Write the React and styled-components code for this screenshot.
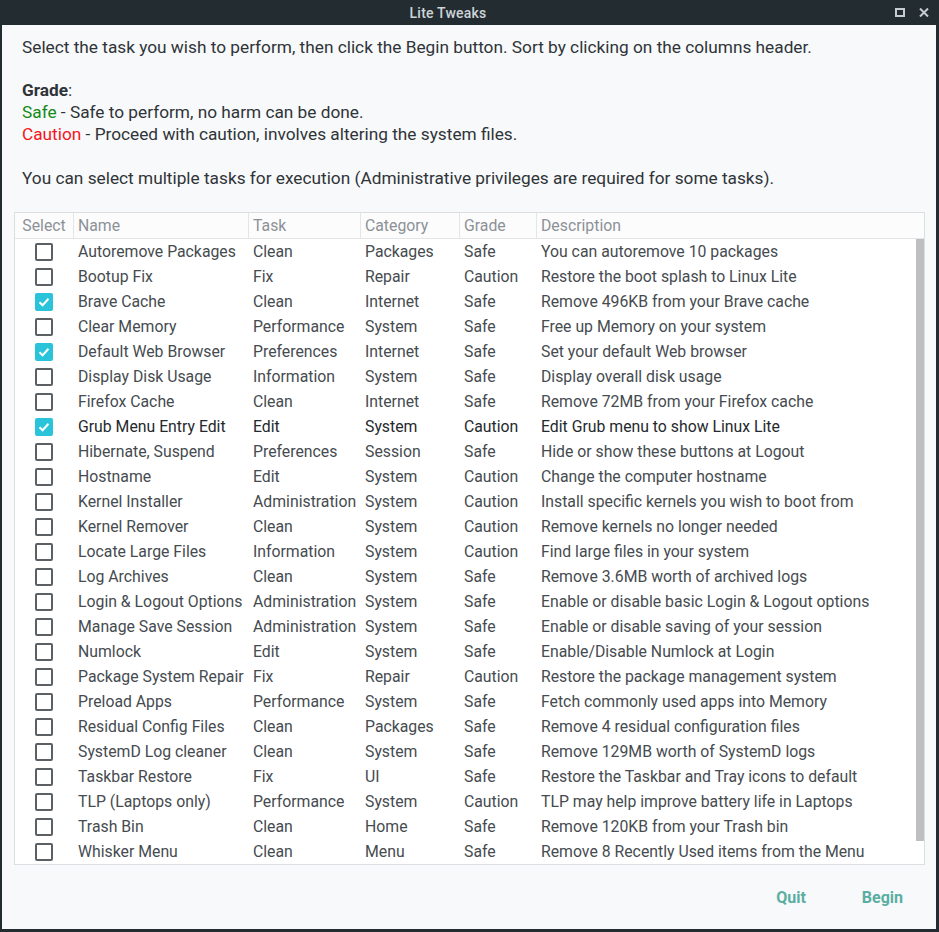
import React from "react";
import styled, { createGlobalStyle } from "styled-components";

const Global = createGlobalStyle`
  html, body { margin: 0; padding: 0; background: #232c31; }
  body { font-family: Roboto, "Noto Sans", "Liberation Sans", sans-serif; }
  * { box-sizing: border-box; }
`;

const Window = styled.div`
  width: 939px;
  height: 932px;
  background: #232c31;
  padding: 0 3px 3px 2px;
  display: flex;
  flex-direction: column;
`;

const TitleBar = styled.div`
  height: 25px;
  position: relative;
  display: flex;
  align-items: center;
  justify-content: center;
  padding-right: 42px;
  color: #cdd4d8;
  font-size: 14px;
  font-weight: 500;
  letter-spacing: 0.2px;
`;

const TitleButtons = styled.div`
  position: absolute;
  right: 7px;
  top: 8px;
  display: flex;
  gap: 14px;
  align-items: center;
`;

const Content = styled.div`
  flex: 1;
  background: #f8f9fa;
  display: flex;
  flex-direction: column;
  padding: 11px 11px 0 12px;
`;

const Intro = styled.div`
  padding-left: 8px;
  color: #2f3439;
  font-size: 17.25px;
  line-height: 22px;
`;

const Line = styled.div`
  min-height: ${(p) => (p.$gap ? 21 : 22)}px;
`;

const Grade = styled.span`
  color: ${(p) => (p.$kind === "Caution" ? "#f5141c" : "#138a17")};
`;

const Table = styled.div`
  margin-top: 23px;
  border: 1px solid #dcdfe2;
  background: #ffffff;
  display: flex;
  flex-direction: column;
`;

const cols = "58px 175px 112px 99px 77px 1fr";

const HeaderRow = styled.div`
  display: grid;
  grid-template-columns: ${cols};
  height: 26px;
  border-bottom: 1px solid #e3e5e7;
  background: #fcfcfd;
`;

const HeaderCell = styled.div`
  color: #8c9196;
  font-size: 15.8px;
  line-height: 25px;
  padding-left: ${(p) => (p.$center ? 0 : 4)}px;
  text-align: ${(p) => (p.$center ? "center" : "left")};
  border-left: ${(p) => (p.$first ? "none" : "1px solid #e3e5e7")};
  white-space: nowrap;
`;

const Body = styled.div`
  display: flex;
  height: 625px;
`;

const Rows = styled.div`
  flex: 1;
  display: flex;
  flex-direction: column;
`;

const Row = styled.div`
  display: grid;
  grid-template-columns: ${cols};
  height: 25px;
  align-items: center;
  color: ${(p) => (p.$active ? "#25292d" : "#464b50")};
  font-size: 15.8px;
`;

const Cell = styled.div`
  padding-left: 5px;
  white-space: nowrap;
  overflow: hidden;
`;

const CheckCell = styled.div`
  display: flex;
  justify-content: center;
`;

const Box = styled.div`
  width: 18px;
  height: 18px;
  border-radius: 2px;
  border: 2px solid ${(p) => (p.$checked ? "#29c3da" : "#5b6065")};
  background: ${(p) => (p.$checked ? "#29c3da" : "transparent")};
  display: flex;
  align-items: center;
  justify-content: center;
`;

const ScrollTrack = styled.div`
  width: 8px;
  display: flex;
  flex-direction: column;
`;

const Thumb = styled.div`
  height: 602px;
  background: #bdbfc1;
`;

const Footer = styled.div`
  flex: 1;
  display: flex;
  justify-content: flex-end;
  align-items: center;
  gap: 24px;
  padding-right: 6px;
`;

const FlatButton = styled.button`
  border: none;
  background: transparent;
  font-family: inherit;
  font-size: 16px;
  font-weight: 700;
  color: #5aaea2;
  padding: 6px 16px;
  cursor: pointer;
`;

const data = [
  ["Autoremove Packages", "Clean", "Packages", "Safe", "You can autoremove 10 packages", false],
  ["Bootup Fix", "Fix", "Repair", "Caution", "Restore the boot splash to Linux Lite", false],
  ["Brave Cache", "Clean", "Internet", "Safe", "Remove 496KB from your Brave cache", true],
  ["Clear Memory", "Performance", "System", "Safe", "Free up Memory on your system", false],
  ["Default Web Browser", "Preferences", "Internet", "Safe", "Set your default Web browser", true],
  ["Display Disk Usage", "Information", "System", "Safe", "Display overall disk usage", false],
  ["Firefox Cache", "Clean", "Internet", "Safe", "Remove 72MB from your Firefox cache", false],
  ["Grub Menu Entry Edit", "Edit", "System", "Caution", "Edit Grub menu to show Linux Lite", true, true],
  ["Hibernate, Suspend", "Preferences", "Session", "Safe", "Hide or show these buttons at Logout", false],
  ["Hostname", "Edit", "System", "Caution", "Change the computer hostname", false],
  ["Kernel Installer", "Administration", "System", "Caution", "Install specific kernels you wish to boot from", false],
  ["Kernel Remover", "Clean", "System", "Caution", "Remove kernels no longer needed", false],
  ["Locate Large Files", "Information", "System", "Caution", "Find large files in your system", false],
  ["Log Archives", "Clean", "System", "Safe", "Remove 3.6MB worth of archived logs", false],
  ["Login & Logout Options", "Administration", "System", "Safe", "Enable or disable basic Login & Logout options", false],
  ["Manage Save Session", "Administration", "System", "Safe", "Enable or disable saving of your session", false],
  ["Numlock", "Edit", "System", "Safe", "Enable/Disable Numlock at Login", false],
  ["Package System Repair", "Fix", "Repair", "Caution", "Restore the package management system", false],
  ["Preload Apps", "Performance", "System", "Safe", "Fetch commonly used apps into Memory", false],
  ["Residual Config Files", "Clean", "Packages", "Safe", "Remove 4 residual configuration files", false],
  ["SystemD Log cleaner", "Clean", "System", "Safe", "Remove 129MB worth of SystemD logs", false],
  ["Taskbar Restore", "Fix", "UI", "Safe", "Restore the Taskbar and Tray icons to default", false],
  ["TLP (Laptops only)", "Performance", "System", "Caution", "TLP may help improve battery life in Laptops", false],
  ["Trash Bin", "Clean", "Home", "Safe", "Remove 120KB from your Trash bin", false],
  ["Whisker Menu", "Clean", "Menu", "Safe", "Remove 8 Recently Used items from the Menu", false],
];

const Check = () => (
  <svg width="14" height="14" viewBox="0 0 14 14">
    <path d="M2.5 7.2 L5.6 10.2 L11.5 3.8" fill="none" stroke="#fff" strokeWidth="2" />
  </svg>
);

export default function App() {
  return (
    <>
      <Global />
      <Window>
        <TitleBar>
          Lite Tweaks
          <TitleButtons>
            <svg width="10" height="9" viewBox="0 0 10 9">
              <rect x="1" y="1" width="8" height="7" fill="none" stroke="#c5cdd2" strokeWidth="2" />
            </svg>
            <svg width="10" height="9" viewBox="0 0 10 9">
              <path d="M1 0.5 L9 8.5 M9 0.5 L1 8.5" stroke="#c5cdd2" strokeWidth="2" />
            </svg>
          </TitleButtons>
        </TitleBar>
        <Content>
          <Intro>
            <Line>Select the task you wish to perform, then click the Begin button. Sort by clicking on the columns header.</Line>
            <Line $gap />
            <Line><b>Grade</b>:</Line>
            <Line><Grade $kind="Safe">Safe</Grade> - Safe to perform, no harm can be done.</Line>
            <Line><Grade $kind="Caution">Caution</Grade> - Proceed with caution, involves altering the system files.</Line>
            <Line />
            <Line>You can select multiple tasks for execution (Administrative privileges are required for some tasks).</Line>
          </Intro>
          <Table>
            <HeaderRow>
              <HeaderCell $first $center>Select</HeaderCell>
              <HeaderCell>Name</HeaderCell>
              <HeaderCell>Task</HeaderCell>
              <HeaderCell>Category</HeaderCell>
              <HeaderCell>Grade</HeaderCell>
              <HeaderCell>Description</HeaderCell>
            </HeaderRow>
            <Body>
              <Rows>
                {data.map(([name, task, cat, grade, desc, checked, active]) => (
                  <Row key={name} $active={active}>
                    <CheckCell>
                      <Box $checked={checked}>{checked && <Check />}</Box>
                    </CheckCell>
                    <Cell>{name}</Cell>
                    <Cell>{task}</Cell>
                    <Cell>{cat}</Cell>
                    <Cell>{grade}</Cell>
                    <Cell>{desc}</Cell>
                  </Row>
                ))}
              </Rows>
              <ScrollTrack>
                <Thumb />
              </ScrollTrack>
            </Body>
          </Table>
          <Footer>
            <FlatButton>Quit</FlatButton>
            <FlatButton>Begin</FlatButton>
          </Footer>
        </Content>
      </Window>
    </>
  );
}
